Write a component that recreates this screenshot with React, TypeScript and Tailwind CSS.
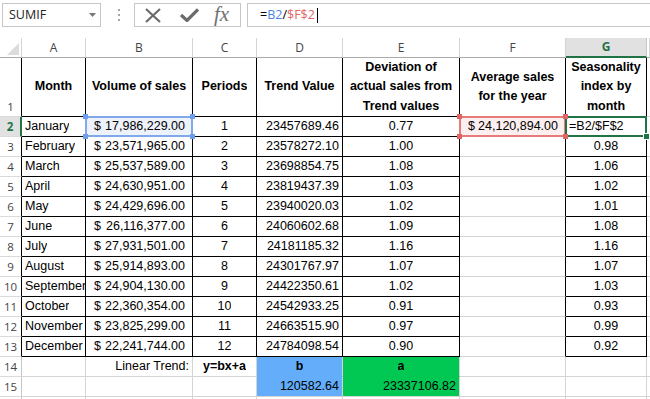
import React from 'react';

type Align = 'l' | 'c' | 'r' | '$';
type Cell = {
  v?: React.ReactNode;
  a?: Align;
  b?: boolean;
  fill?: 'blue' | 'green';
  sel?: 'blue' | 'red' | 'green';
} | null;

const data: [string, string, string, string, string, string][] = [
  ['January', '17,986,229.00', '1', '23457689.46', '0.77', '=B2/$F$2'],
  ['February', '23,571,965.00', '2', '23578272.10', '1.00', '0.98'],
  ['March', '25,537,589.00', '3', '23698854.75', '1.08', '1.06'],
  ['April', '24,630,951.00', '4', '23819437.39', '1.03', '1.02'],
  ['May', '24,429,696.00', '5', '23940020.03', '1.02', '1.01'],
  ['June', '26,116,377.00', '6', '24060602.68', '1.09', '1.08'],
  ['July', '27,931,501.00', '7', '24181185.32', '1.16', '1.16'],
  ['August', '25,914,893.00', '8', '24301767.97', '1.07', '1.07'],
  ['September', '24,904,130.00', '9', '24422350.61', '1.02', '1.03'],
  ['October', '22,360,354.00', '10', '24542933.25', '0.91', '0.93'],
  ['November', '23,825,299.00', '11', '24663515.90', '0.97', '0.99'],
  ['December', '22,241,744.00', '12', '24784098.54', '0.90', '0.92'],
];

const H = (v: React.ReactNode): Cell => ({ v, a: 'c', b: true });

function buildRows(): Cell[][] {
  const rows: Cell[][] = [];
  rows.push([
    H('Month'),
    H('Volume of sales'),
    H('Periods'),
    H('Trend Value'),
    H(<>Deviation of<br />actual sales from<br />Trend values</>),
    H(<>Average sales<br />for the year</>),
    H(<>Seasonality<br />index by<br />month</>),
    null,
  ]);
  data.forEach(([m, vol, p, trend, dev, g], i) => {
    const first = i === 0;
    rows.push([
      { v: m, a: 'l' },
      { v: vol, a: '$', sel: first ? 'blue' : undefined },
      { v: p, a: 'c' },
      { v: trend, a: 'r' },
      { v: dev, a: 'c' },
      first ? { v: '24,120,894.00', a: '$', sel: 'red' } : null,
      first ? { v: g, a: 'l', sel: 'green' } : { v: g, a: 'c' },
      null,
    ]);
  });
  rows.push([
    null,
    { v: 'Linear Trend:', a: 'r' },
    { v: 'y=bx+a', a: 'c', b: true },
    { v: 'b', a: 'c', b: true, fill: 'blue' },
    { v: 'a', a: 'c', b: true, fill: 'green' },
    null,
    null,
    null,
  ]);
  rows.push([
    null,
    null,
    null,
    { v: '120582.64', a: 'r', fill: 'blue' },
    { v: '23337106.82', a: 'r', fill: 'green' },
    null,
    null,
    null,
  ]);
  rows.push([null, null, null, null, null, null, null, null]);
  return rows;
}

// cells that carry the thin black table borders
const inTable = (c: number, r: number) =>
  (c >= 1 && c <= 5 && r >= 1 && r <= 13) ||
  (c === 7 && r >= 1 && r <= 13) ||
  (c === 6 && r === 1);

const alignCls: Record<Align, string> = {
  l: 'justify-start pl-[3px]',
  c: 'justify-center',
  r: 'justify-end pr-[3px]',
  $: 'justify-between pl-[8px] pr-[7px]',
};

function Handles({ red }: { red?: boolean }) {
  const h = `absolute z-20 w-[5px] h-[5px] ${red ? 'bg-[#e06666]' : 'bg-[#6d9eeb]'}`;
  return (
    <>
      <div className={`${h} -left-[3px] -top-[3px]`} />
      <div className={`${h} -right-[3px] -top-[3px]`} />
      <div className={`${h} -left-[3px] -bottom-[3px]`} />
      <div className={`${h} -right-[3px] -bottom-[3px]`} />
    </>
  );
}

function SheetCell({ c, r, cell }: { c: number; r: number; cell: Cell }) {
  const rb = inTable(c, r) || inTable(c + 1, r);
  const bb = inTable(c, r) || inTable(c, r + 1);
  const fill = cell?.fill;
  const sel = cell?.sel;

  const bg =
    fill === 'blue' ? 'bg-[#63adfb]'
    : fill === 'green' ? 'bg-[#00c853]'
    : sel === 'blue' ? 'bg-[#edf2fb]'
    : sel === 'red' ? 'bg-[#fcefef]'
    : 'bg-white';
  const rCls = rb ? 'border-r-black' : 'border-r-[#d4d4d4]';
  const bCls =
    fill === 'blue' && r === 14 ? 'border-b-[#63adfb]'
    : fill === 'green' && r === 14 ? 'border-b-[#00c853]'
    : bb ? 'border-b-black'
    : 'border-b-[#d4d4d4]';

  const a = cell?.a ?? 'l';

  return (
    <div className={`relative flex items-center border-r border-b ${rCls} ${bCls} ${bg} ${alignCls[a]} ${cell?.b ? 'font-bold' : ''}`}>
      {cell && a === '$' && (
        <>
          <span>$</span>
          <span>{cell.v}</span>
        </>
      )}
      {cell && a !== '$' && (
        <span className={`min-w-0 overflow-hidden whitespace-nowrap ${r === 1 ? 'text-center leading-[19.5px]' : ''}`}>
          {cell.v}
        </span>
      )}
      {sel === 'blue' && (
        <>
          <div className="absolute -left-px -top-px -right-px -bottom-px z-10 border-2 border-[#7fa9ea]" />
          <Handles />
        </>
      )}
      {sel === 'red' && (
        <>
          <div className="absolute -left-px -top-px -right-px -bottom-px z-10 border-2 border-[#e77a7a]" />
          <Handles red />
        </>
      )}
      {sel === 'green' && (
        <>
          <div className="absolute -left-px -top-px -right-px -bottom-px z-10 border-2 border-[#217346]" />
          <div className="absolute z-20 -right-[4px] -bottom-[4px] w-[7px] h-[7px] bg-[#217346] border border-white" />
        </>
      )}
    </div>
  );
}

function RowHead({ r }: { r: number }) {
  const sel = r === 2;
  const rCls = sel
    ? 'border-r-2 border-r-[#217346] bg-[#e1e1e1] text-[#217346] font-bold'
    : r <= 13
    ? 'border-r border-r-black bg-white text-[#444]'
    : 'border-r border-r-[#c6c6c6] bg-white text-[#444]';
  return (
    <div className={`flex justify-center border-b border-b-[#dadada] font-['Open_Sans',sans-serif] text-[11.5px] ${rCls} ${r === 1 ? 'items-end pb-[1px]' : 'items-center'}`}>
      {/* row 16 is only a sliver at the bottom edge */}
      {r <= 15 ? r : ''}
    </div>
  );
}

function ColHeaders() {
  const letters = ['A', 'B', 'C', 'D', 'E', 'F', 'G', ''];
  return (
    <>
      <div className="relative bg-white border-r border-r-[#d4d4d4] border-b border-b-[#ababab]">
        <svg className="absolute left-[7px] top-[5px]" width="12" height="12" viewBox="0 0 12 12">
          <polygon points="12,0 12,12 0,12" fill="#dcdcdc" />
        </svg>
      </div>
      {letters.map((l, i) =>
        l === 'G' ? (
          <div key={i} className="flex items-center justify-center bg-[#e1e1e1] border-r border-r-[#c6c6c6] border-b-2 border-b-[#217346] text-[#217346] font-bold font-['Open_Sans',sans-serif] text-[12px]">
            {l}
          </div>
        ) : (
          <div key={i} className="flex items-center justify-center bg-white border-r border-r-[#d4d4d4] border-b border-b-[#ababab] text-[#444] font-['Open_Sans',sans-serif] text-[12px]">
            {l}
          </div>
        )
      )}
    </>
  );
}

function FormulaBar() {
  return (
    <div className="h-[38px] flex items-start pt-[3px] bg-white">
      <div className="ml-[2px] w-[99px] h-[24px] border border-[#c6c6c6] flex items-center justify-between pl-[6px] pr-[4px]">
        <span className="font-['Open_Sans',sans-serif] text-[12.5px] text-[#222]">SUMIF</span>
        <svg width="7" height="4" viewBox="0 0 7 4">
          <polygon points="0,0 7,0 3.5,4" fill="#777" />
        </svg>
      </div>
      <div className="ml-[17px] mt-[6px] flex flex-col gap-[3px]">
        <div className="w-[2px] h-[2px] bg-[#a6a6a6]" />
        <div className="w-[2px] h-[2px] bg-[#a6a6a6]" />
        <div className="w-[2px] h-[2px] bg-[#a6a6a6]" />
      </div>
      <div className="ml-[14px] w-[107px] h-[24px] border border-[#c6c6c6] flex items-center pl-[10px]">
        <svg width="16" height="15" viewBox="0 0 16 15">
          <path d="M1 1 L15 14 M15 1 L1 14" stroke="#6b6b6b" strokeWidth="2.2" />
        </svg>
        <svg className="ml-[19px]" width="19" height="14" viewBox="0 0 19 14">
          <path d="M1 7 L7 12.5 L18 1.5" stroke="#6b6b6b" strokeWidth="3.2" fill="none" />
        </svg>
        <span className="ml-[15px] -mt-[2px] font-['Liberation_Serif',serif] italic text-[21px] text-[#707070] leading-none">fx</span>
      </div>
      <div className="ml-[6px] flex-1 h-[24px] border border-r-0 border-[#c6c6c6] flex items-center pl-[12px] font-['Open_Sans',sans-serif] text-[12.5px]">
        <span className="text-black">=</span>
        <span className="text-[#4a86e8]">B2</span>
        <span className="text-black">/</span>
        <span className="text-[#e06666]">$F$2</span>
        <span className="ml-[2px] w-px h-[15px] bg-black" />
      </div>
    </div>
  );
}

export default function App() {
  const rows = buildRows();
  return (
    <div className="w-[650px] h-[399px] overflow-hidden bg-white font-['Liberation_Sans',Arial,sans-serif] text-[12.5px] text-black">
      <FormulaBar />
      <div className="grid grid-cols-[22px_64px_107px_64px_86px_117px_106px_81px_3px] grid-rows-[20px_59px_repeat(15,20px)]">
        <ColHeaders />
        {rows.map((cells, i) => {
          const r = i + 1;
          return (
            <React.Fragment key={r}>
              <RowHead r={r} />
              {cells.map((cell, j) => (
                <SheetCell key={j} c={j + 1} r={r} cell={cell} />
              ))}
            </React.Fragment>
          );
        })}
      </div>
    </div>
  );
}
